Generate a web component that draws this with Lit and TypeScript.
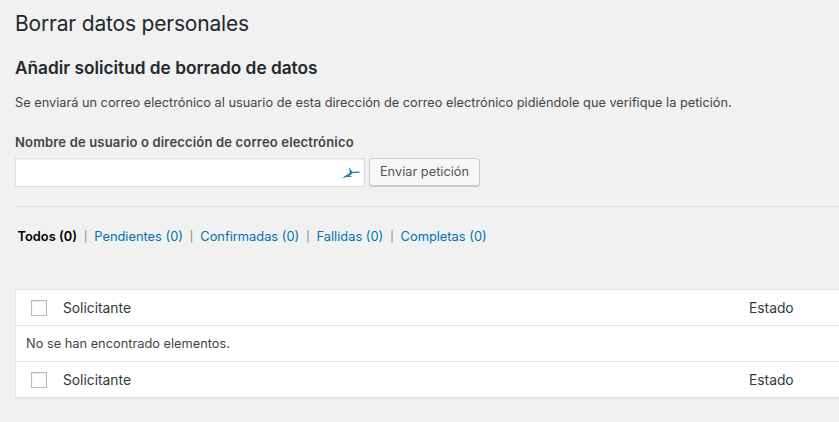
import { LitElement, html, css } from "lit";
import { customElement } from "lit/decorators.js";

@customElement("app-root")
export class AppRoot extends LitElement {
  static styles = css`
    :host {
      display: block;
      width: 839px;
      height: 422px;
      overflow: hidden;
      background: #f1f1f1;
      color: #444;
      font-family: Inter, "Noto Sans", sans-serif;
      font-size: 13px;
    }
    .wrap { padding: 0 0 0 15px; width: 824px; box-sizing: border-box; }
    h1 {
      margin: 0; padding: 12px 0 0; height: 44px; box-sizing: border-box;
      font-size: 21px; font-weight: 400; line-height: 24px; color: #23282d; letter-spacing: -0.19px;
    }
    h2 {
      margin: 0; padding: 13px 0 0 0; height: 46px; box-sizing: border-box;
      font-size: 17.25px; font-weight: 600; line-height: 22px; color: #23282d;
    }
    .desc { margin: 0; height: 38px; font-size: 12.76px; line-height: 18px; color: #444; display: flex; align-items: flex-start; padding-top: 4px; box-sizing: border-box; white-space: nowrap; }
    .lbl { height: 23px; margin-top: 5px; font-size: 13px; letter-spacing: 0.17px; font-weight: 600; line-height: 18px; color: #444; white-space: nowrap; }
    .form { display: flex; gap: 4px; align-items: flex-start; margin-top: 2px; }
    .input {
      width: 350px; height: 29px; box-sizing: border-box; background: #fff; border: 1px solid #ddd;
      box-shadow: inset 0 1px 2px rgba(0,0,0,.07); display: flex; align-items: center; justify-content: flex-end; padding-right: 4px;
    }
    .btn {
      width: 111px; height: 28px; box-sizing: border-box; background: #f7f7f7; border: 1px solid #ccc; border-radius: 3px;
      box-shadow: 0 1px 0 #ccc; color: #555; font: inherit; font-size: 12.8px; line-height: 24px; text-align: center; padding: 0;
    }
    hr { border: 0; border-top: 1px solid #ddd; margin: 19px 0 0; width: 839px; }
    .subsub { display: flex; align-items: center; height: 18px; margin-top: 21px; padding-left: 2.5px; font-size: 12.85px; line-height: 18px; white-space: nowrap; }
    .subsub a { color: #0073aa; text-decoration: none; }
    .subsub b { color: #000; font-weight: 600; }
    .sep { color: #777; margin: 0 6.9px; font-size: 10.5px; }
    .table {
      margin-top: 43px; width: 900px; background: #fff; border: 1px solid #e5e5e5; box-shadow: 0 1px 1px rgba(0,0,0,.04); box-sizing: border-box;
    }
    .row { display: grid; grid-template-columns: 47px 686px 1fr; align-items: center; height: 35px; font-size: 13.8px; color: #32373c; }
    .row + .row, .msg { border-top: 1px solid #e1e1e1; }
    .cb { width: 16px; height: 16px; box-sizing: border-box; margin-left: 15px; border: 1px solid #b4b9be; background: #fff; box-shadow: inset 0 1px 2px rgba(0,0,0,.1); }
    .msg { height: 36px; box-sizing: border-box; padding-left: 10px; display: flex; align-items: center; font-size: 12.8px; color: #444; }
    .msg + .row { border-top: 1px solid #e1e1e1; height: 35px; }
  `;

  private headerRow() {
    return html`<div class="row">
      <div class="cb"></div>
      <div>Solicitante</div>
      <div>Estado</div>
    </div>`;
  }

  render() {
    return html`<div class="wrap">
      <h1>Borrar datos personales</h1>
      <h2>Añadir solicitud de borrado de datos</h2>
      <p class="desc">Se enviará un correo electrónico al usuario de esta dirección de correo electrónico pidiéndole que verifique la petición.</p>
      <div class="lbl">Nombre de usuario o dirección de correo electrónico</div>
      <div class="form">
        <div class="input">
          <svg width="18" height="12" viewBox="0 0 18 12" fill="none">
            <path d="M8.5 5.6L17.5 5.2" stroke="#1e73a0" stroke-width="1.2"/>
            <path d="M0.3 11.6C2 9.6 3.5 8.4 5.5 7.6C7 7 7.8 6.3 7.8 4.8C7.8 3.2 7.4 1.8 6.6 0.4C8.2 1.4 9.6 3 10 5C10.2 6.8 9.4 7.8 7.8 8.4C6.2 9 4 9.8 0.3 11.6Z" fill="#1e73a0"/>
            <path d="M4 9.6L9.5 9.4" stroke="#1e73a0" stroke-width="0.9"/>
          </svg>
        </div>
        <button class="btn">Enviar petición</button>
      </div>
      <hr />
      <div class="subsub">
        <b>Todos (0)</b><span class="sep">|</span>
        <a href="#">Pendientes (0)</a><span class="sep">|</span>
        <a href="#">Confirmadas (0)</a><span class="sep">|</span>
        <a href="#">Fallidas (0)</a><span class="sep">|</span>
        <a href="#">Completas (0)</a>
      </div>
      <div class="table">
        ${this.headerRow()}
        <div class="msg">No se han encontrado elementos.</div>
        ${this.headerRow()}
      </div>
    </div>`;
  }
}
